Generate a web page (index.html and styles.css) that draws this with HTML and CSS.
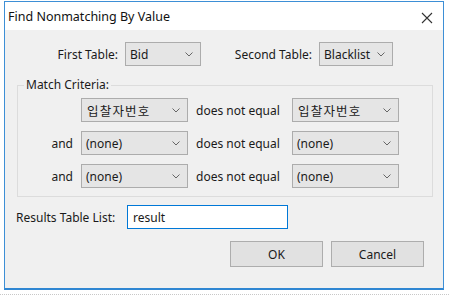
FILE: index.html
```html
<!DOCTYPE html>
<html>
<head>
<meta charset="utf-8">
<link rel="stylesheet" href="styles.css">
</head>
<body>
<div class="win">
  <div class="titlebar">
    <span class="title">Find Nonmatching By Value</span>
    <svg class="close" width="12" height="12" viewBox="0 0 12 12"><path d="M1 1L11 11M11 1L1 11" stroke="#333" stroke-width="1.1" fill="none"/></svg>
  </div>
  <div class="body">
    <div class="tables">
      <span class="lbl lbl-first">First Table:</span>
      <div class="sel sel-bid"><span>Bid</span><svg class="chev" width="8" height="5" viewBox="0 0 8 5"><path d="M0.5 0.5L4 4L7.5 0.5" stroke="#666" fill="none"/></svg></div>
      <span class="lbl lbl-second">Second Table:</span>
      <div class="sel sel-black"><span>Blacklist</span><svg class="chev" width="8" height="5" viewBox="0 0 8 5"><path d="M0.5 0.5L4 4L7.5 0.5" stroke="#666" fill="none"/></svg></div>
    </div>
    <fieldset class="group">
      <legend>Match Criteria:</legend>
      <div class="crit">
        <span class="and"></span>
        <div class="sel sel-crit"><span class="ko">입찰자번호</span><svg class="chev" width="8" height="5" viewBox="0 0 8 5"><path d="M0.5 0.5L4 4L7.5 0.5" stroke="#666" fill="none"/></svg></div>
        <span class="op">does not equal</span>
        <div class="sel sel-crit"><span class="ko">입찰자번호</span><svg class="chev" width="8" height="5" viewBox="0 0 8 5"><path d="M0.5 0.5L4 4L7.5 0.5" stroke="#666" fill="none"/></svg></div>
      </div>
      <div class="crit">
        <span class="and">and</span>
        <div class="sel sel-crit"><span>(none)</span><svg class="chev" width="8" height="5" viewBox="0 0 8 5"><path d="M0.5 0.5L4 4L7.5 0.5" stroke="#666" fill="none"/></svg></div>
        <span class="op">does not equal</span>
        <div class="sel sel-crit"><span>(none)</span><svg class="chev" width="8" height="5" viewBox="0 0 8 5"><path d="M0.5 0.5L4 4L7.5 0.5" stroke="#666" fill="none"/></svg></div>
      </div>
      <div class="crit">
        <span class="and">and</span>
        <div class="sel sel-crit"><span>(none)</span><svg class="chev" width="8" height="5" viewBox="0 0 8 5"><path d="M0.5 0.5L4 4L7.5 0.5" stroke="#666" fill="none"/></svg></div>
        <span class="op">does not equal</span>
        <div class="sel sel-crit"><span>(none)</span><svg class="chev" width="8" height="5" viewBox="0 0 8 5"><path d="M0.5 0.5L4 4L7.5 0.5" stroke="#666" fill="none"/></svg></div>
      </div>
    </fieldset>
    <div class="results">
      <span class="lbl-results">Results Table List:</span>
      <div class="input">result</div>
    </div>
    <div class="buttons">
      <div class="btn">OK</div>
      <div class="btn">Cancel</div>
    </div>
  </div>
</div>
<div class="dots"></div>
</body>
</html>
```
FILE: styles.css
```css
html, body {
  margin: 0;
  padding: 0;
  background: #ffffff;
}
body {
  font-family: "Noto Sans", "Noto Sans CJK KR", sans-serif;
  font-size: 12px;
  color: #1a1a1a;
  padding-top: 1px;
}
.win {
  margin-left: 4px;
  width: 438px;
  height: 286px;
  border: 1px solid #3d8fd6;
  border-bottom: 2px solid #2f86d2;
  display: flex;
  flex-direction: column;
}
.titlebar {
  height: 28px;
  background: #ffffff;
  display: flex;
  align-items: center;
  justify-content: space-between;
  padding: 0 10px 0 3px;
  flex: none;
}
.title {
  font-size: 12.5px;
  color: #111;
}
.close {
  margin-top: 3px;
}
.body {
  flex: 1;
  background: #f0f0f0;
  display: flex;
  flex-direction: column;
}
.tables {
  margin-top: 12px;
  display: flex;
  align-items: center;
  height: 24px;
}
.lbl {
  text-align: right;
  margin-right: 7px;
}
.lbl-first { width: 113px; }
.lbl-second { width: 111px; }
.sel {
  box-sizing: border-box;
  height: 24px;
  background: #e5e5e5;
  border: 1px solid #acacac;
  display: flex;
  align-items: center;
  justify-content: space-between;
  padding: 0 7px 0 4px;
}
.sel-bid { width: 76px; }
.sel-black { width: 74px; }
.sel-crit { width: 107px; }
.ko {
  font-family: "Noto Sans CJK KR", sans-serif;
  font-size: 12.5px;
  font-weight: 400;
  letter-spacing: 1.2px;
  padding-left: 1px;
}
.group {
  margin: 11px 0 0 12px;
  width: 416px;
  box-sizing: border-box;
  border: 1px solid #dcdcdc;
  padding: 5px 0 8px 0;
  display: flex;
  flex-direction: column;
  gap: 9px;
}
.group legend {
  padding: 0 2px;
  margin-left: 6px;
  line-height: 16px;
}
.crit {
  display: flex;
  align-items: center;
  gap: 8px;
  height: 24px;
}
.and {
  width: 55px;
  text-align: right;
}
.op {
  width: 88px;
  white-space: nowrap;
}
.results {
  margin: 8px 0 0 11px;
  display: flex;
  align-items: center;
  height: 24px;
}
.lbl-results {
  width: 111px;
}
.input {
  box-sizing: border-box;
  width: 161px;
  height: 24px;
  background: #ffffff;
  border: 1px solid #0078d7;
  display: flex;
  align-items: center;
  padding-left: 5px;
}
.buttons {
  margin: 12px 19px 0 0;
  display: flex;
  justify-content: flex-end;
  gap: 8px;
}
.btn {
  box-sizing: border-box;
  width: 93px;
  height: 26px;
  background: #e1e1e1;
  border: 1px solid #adadad;
  display: flex;
  align-items: center;
  justify-content: center;
}
.dots {
  margin-top: 4px;
  height: 0;
  border-top: 1px dotted #c8c8c8;
}
```
